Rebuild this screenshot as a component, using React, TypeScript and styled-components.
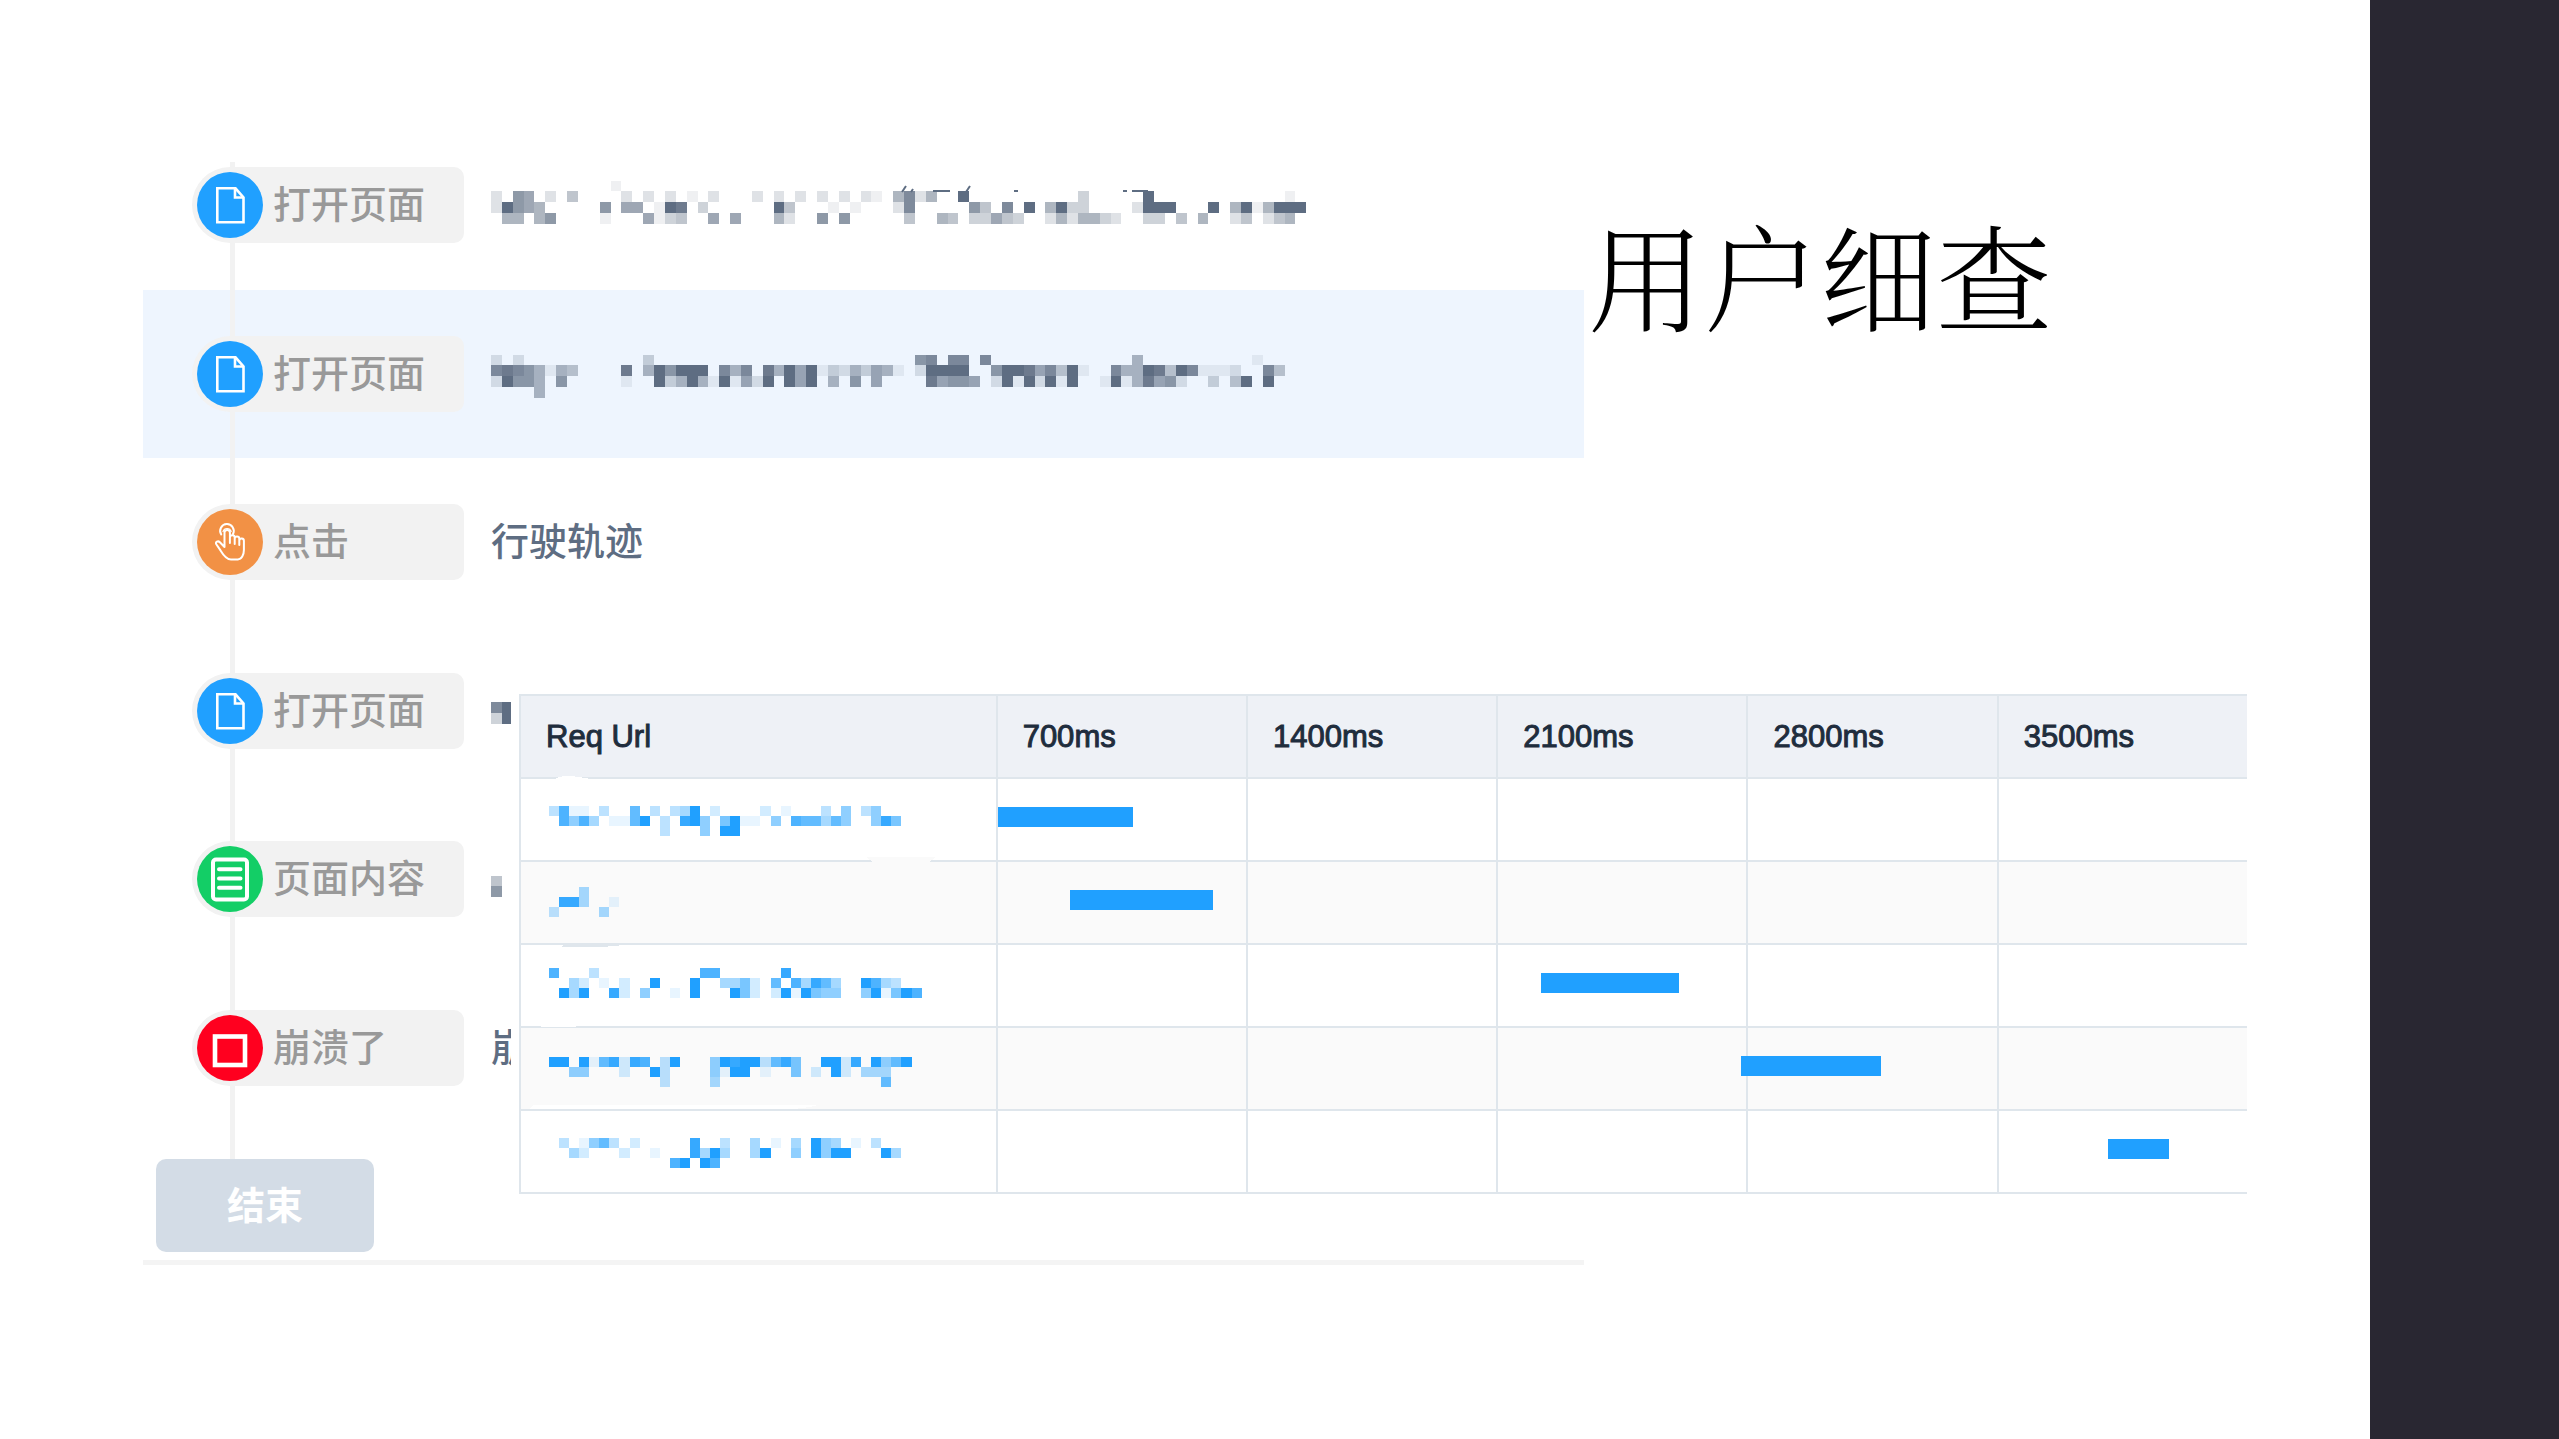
import React from "react";
import styled, { createGlobalStyle } from "styled-components";

const GlobalStyle = createGlobalStyle`
  *, *::before, *::after { box-sizing: border-box; }
  body { margin: 0; background: #fff; }
`;

const sans = `"Liberation Sans", "Noto Sans CJK SC", sans-serif`;
const slate = "#5e6d82";
const blue = "#20a0ff";
const line = "#dfe6ec";

const Page = styled.div`
  display: flex;
  min-height: 100vh;
  font-family: ${sans};
  background: #fff;
`;

const Slide = styled.main`
  flex: 1;
  min-width: 0;
  display: grid;
  grid-template-columns: 368px minmax(0, 1073fr) minmax(0, 663fr);
  grid-template-rows: 573px auto 1fr;
  padding: 121px 123px 0 143px;
`;

const SideBand = styled.aside`
  flex: 0 0 189px;
  background: #292732;
`;

const Title = styled.h1`
  grid-area: 1 / 3 / 2 / 4;
  margin: 0;
  padding: 94px 0 0 4px;
  font-family: "Noto Serif CJK SC", "Songti SC", SimSun, "Noto Sans CJK SC", serif;
  font-size: 116px;
  line-height: 116px;
  font-weight: 300;
  color: #000;
  white-space: nowrap;
`;

const Timeline = styled.section`
  grid-area: 1 / 1 / 4 / 3;
  align-self: start;
  padding-bottom: 8px;
  border-bottom: 5px solid #f4f4f4;
`;

const Steps = styled.ol`
  position: relative;
  display: grid;
  grid-auto-rows: 1fr;
  height: 1011px;
  margin: 0 0 27px;
  padding: 0;
  list-style: none;

  &::before {
    content: "";
    position: absolute;
    left: 87px;
    top: 41px;
    bottom: -27px;
    width: 5px;
    background: #f2f2f2;
  }
`;

const Step = styled.li<{ $active?: boolean }>`
  display: flex;
  align-items: center;
  gap: 27px;
  padding-left: 49px;
  background: ${(p) => (p.$active ? "#eef5fe" : "transparent")};
`;

const Tag = styled.div`
  position: relative;
  display: flex;
  align-items: center;
  gap: 10px;
  width: 272px;
  height: 76px;
  padding-left: 5px;
  border-radius: 38px 10px 10px 38px;
  background: #f2f2f2;
  color: #999;
  font-size: 38px;
  line-height: 38px;
  font-weight: 500;
`;

const Disc = styled.span<{ $color: string }>`
  display: block;
  width: 66px;
  height: 66px;
  border-radius: 50%;
  background: ${(p) => p.$color};
`;

const Glyph = styled.svg`
  display: block;
  width: 66px;
  height: 66px;
  fill: none;
  stroke: #fff;
`;

const Detail = styled.span`
  color: ${slate};
  font-size: 38px;
  line-height: 38px;
  font-weight: 500;
  white-space: nowrap;
`;

const EndButton = styled.button`
  display: block;
  width: 218px;
  height: 93px;
  margin: 0 0 0 13px;
  padding: 0;
  border: 0;
  border-radius: 10px;
  background: #d3dce6;
  color: #fff;
  font-family: inherit;
  font-size: 38px;
  line-height: 38px;
  font-weight: 700;
`;

const Panel = styled.section`
  grid-area: 2 / 2 / 3 / 4;
  position: relative;
  padding-left: 8px;
  background: #fff;
`;

const Table = styled.table`
  width: 100%;
  table-layout: fixed;
  border-collapse: separate;
  border-spacing: 0;
  border-top: 2px solid ${line};
  border-left: 2px solid ${line};
`;

const UrlCol = styled.col`
  width: 27.5%;
`;

const TimeCol = styled.col`
  width: 14.5%;
`;

const HeadCell = styled.th`
  height: 83px;
  padding: 0 0 0 25px;
  border-bottom: 2px solid ${line};
  background: #eef1f6;
  color: #1f2d3d;
  font-size: 31px;
  line-height: 36px;
  font-weight: 400;
  -webkit-text-stroke: 1px #1f2d3d;
  text-align: left;

  & + & { border-left: 2px solid ${line}; }
`;

const Row = styled.tr<{ $striped: boolean }>`
  background: ${(p) => (p.$striped ? "#fafafa" : "#fff")};
`;

const Cell = styled.td`
  position: relative;
  height: 83px;
  padding: 0 0 0 25px;
  border-bottom: 2px solid ${line};

  & + & { border-left: 2px solid ${line}; }
`;

const Bar = styled.span`
  position: absolute;
  z-index: 1;
  top: 28px;
  height: 20px;
  background: ${blue};
`;

const MosaicSvg = styled.svg`
  display: block;
  overflow: visible;
  shape-rendering: crispEdges;
`;

/* Each mosaic line is a list of "column:run" groups; every character of a run
   is one tile, its strength from 1 (faint) to A (solid). */
type MosaicData = { dx?: number; dy: number; lines: string[] };

function Mosaic({
  data, pitch, color, width, height, children,
}: {
  data: MosaicData; pitch: number; color: string; width: number; height: number; children?: React.ReactNode;
}) {
  const tiles: React.ReactNode[] = [];
  data.lines.forEach((text, row) => {
    text.split(" ").filter(Boolean).forEach((group) => {
      const [start, run] = group.split(":");
      run.split("").forEach((ch, i) => {
        const col = Number(start) + i;
        const x = Math.round((data.dx ?? 0) + col * pitch);
        const y = Math.round(data.dy + row * pitch);
        tiles.push(
          <rect
            key={`${row}-${col}`}
            x={x}
            y={y}
            width={Math.round((data.dx ?? 0) + (col + 1) * pitch) - x}
            height={Math.round(data.dy + (row + 1) * pitch) - y}
            fill={color}
            opacity={parseInt(ch, 16) / 10}
          />
        );
      });
    });
  });
  return (
    <MosaicSvg width={width} height={height} viewBox={`0 0 ${width} ${height}`} aria-hidden="true">
      {tiles}
      {children}
    </MosaicSvg>
  );
}

const PageIcon = () => (
  <Glyph viewBox="0 0 66 66" strokeWidth="2.6">
    <path d="M20.3 16.3H38.5L46.5 25.5V50.2H20.3Z" />
    <path d="M38 16.5V25.5H46.5" />
  </Glyph>
);

const TapIcon = () => (
  <Glyph viewBox="0 0 66 66" strokeWidth="2" strokeLinecap="round" strokeLinejoin="round">
    <path d="M27.5 38V23.6a2.7 2.7 0 0 1 5.4 0V34M32.9 28.6a2.4 2.4 0 0 1 4.8 0V35M37.7 29.8a2.3 2.3 0 0 1 4.6 0V36M42.3 31.6a2.3 2.3 0 0 1 4.6 .4V41c0 5-2.4 9.4-6 9.4H34c-3.5 0-7.5-4-10.5-9l-4.2-6.2c-1.2-2.2 1.6-3.8 3.6-2L27.5 38" />
    <path d="M24.2 25.5a6.8 6.8 0 1 1 11.8-.5" />
    <path d="M26 22.5a4.3 4.3 0 0 1 8.2 0" strokeWidth="1.2" />
  </Glyph>
);

const ContentIcon = () => (
  <Glyph viewBox="0 0 66 66" strokeWidth="4" strokeLinecap="round">
    <rect x="16" y="13.5" width="34" height="40" rx="3" />
    <path d="M22 23.3H43.5M22 32.5H43.5M22 41.7H43.5" />
  </Glyph>
);

const CrashIcon = () => (
  <Glyph viewBox="0 0 66 66" strokeWidth="4.6">
    <rect x="18" y="21.5" width="30" height="28.5" />
  </Glyph>
);

const visits: MosaicData[] = [
  {
    dy: 8.5,
    lines: [
      "11:1",
      "0:2 2:76 5:2 7:4 12:2 14:2 16:2 18:1 20:2 24:2 26:2 28:2 30:2 32:2 34:21 37:5825 43:A 54:3 60:A 73:1",
      "0:2A765 10:7 12:66 15:1A9 19:3 26:A4 31:1 33:1 37:28 44:74 47:8 49:A 51:5A33 59:2AAA 66:A 68:5A15AAA",
      "1:55 4:57 10:1 14:6134 20:6 22:6 26:52 30:7 32:7 38:4 41:54 44:33643 51:2525532 60:33 63:4 65:5 68:24 71:245",
    ],
  },
  {
    dy: 13.5,
    lines: [
      "0:2 2:2 14:3 39:78 42:88 45:8 59:5 70:1",
      "0:898751 6:54 12:9 14:5A7AAA 21:858 25:95A6A1 31:3253651 39:2AAAA 46:7AA9684A1 57:855A94A81112 71:84",
      "0:2A775 6:7 12:1 15:A35A51A162A 27:A6A 31:5 33:7 35:6 40:96776 46:2A1A2A1A 56:1A159672 66:3 68:4A 71:A",
      "4:5",
    ],
  },
  { dy: 24, lines: ["0:8A", "0:3A"] },
  { dy: 29.5, lines: ["0:4", "0:7"] },
];

const VisitMosaic = ({ index, width = 820, children }: { index: number; width?: number; children?: React.ReactNode }) => (
  <Mosaic data={visits[index]} pitch={10.87} color={slate} width={width} height={66}>{children}</Mosaic>
);

const steps = [
  {
    label: "打开页面", color: blue, icon: <PageIcon />,
    detail: (
      <VisitMosaic index={0}>
        <path
          d="M411 20l4-6M420 20l2-3M442 19h17M475 20l4-6M523 19h4M632 19h4M641 19h16"
          stroke={slate}
          strokeWidth="2"
          shapeRendering="auto"
        />
      </VisitMosaic>
    ),
  },
  { label: "打开页面", color: blue, icon: <PageIcon />, active: true, detail: <VisitMosaic index={1} /> },
  { label: "点击", color: "#f29145", icon: <TapIcon />, detail: <Detail>行驶轨迹</Detail> },
  { label: "打开页面", color: blue, icon: <PageIcon />, detail: <VisitMosaic index={2} width={22} /> },
  { label: "页面内容", color: "#13ce66", icon: <ContentIcon />, detail: <VisitMosaic index={3} width={22} /> },
  { label: "崩溃了", color: "#ff001f", icon: <CrashIcon />, detail: <Detail>崩</Detail> },
];

const ticks = [700, 1400, 2100, 2800, 3500];
const stepMs = 700;

const requests: { start: number; duration: number; url: MosaicData; smudge?: React.ReactNode }[] = [
  {
    start: 0, duration: 382,
    url: {
      dy: 11,
      lines: [
        "0:3811 5:3 8:7 10:3 12:34A 16:2 21:2 23:1 27:3 29:5 31:35",
        "1:8584 6:117A 11:3 13:9A5 17:6A11 22:5 24:877475 32:596",
        "11:3 15:5 17:AA",
      ],
    },
    smudge: <path d="M9-16Q12-19 24-19Q36-18 44-16Z" fill="#fff" />,
  },
  {
    start: 204, duration: 403,
    url: { dy: 9, lines: ["3:4", "1:994 6:1", "0:3 5:4"] },
    smudge: <path d="M320-21H390L382-15H328Z" fill="#fafafa" />,
  },
  {
    start: 1521, duration: 388,
    url: {
      dy: 7,
      lines: [
        "0:8 4:3 15:88 23:9",
        "2:42 5:1 7:2 10:A 14:A 17:4462 22:7 24:84974 31:A843",
        "1:A4A 6:92 9:5 12:1 14:A 18:A62 22:2A1A655 31:5A16A8",
      ],
    },
    smudge: <path d="M18-16H78Q60-14 50-14H15Z" fill={line} />,
  },
  {
    start: 2084, duration: 396,
    url: {
      dy: 13,
      lines: [
        "0:AA 3:A179298 11:3A 16:5A9AA3796 27:AA29 32:A57A",
        "2:55 7:2 10:A3 16:51AA 21:1 24:6 26:2 28:A2 31:444",
        "11:3 16:4 33:7",
      ],
    },
    smudge: <path d="M-4-19H30V-17H-6Z" fill="#fff" />,
  },
  {
    start: 3109, duration: 172,
    url: {
      dy: 11,
      lines: [
        "1:3 3:1573 8:2 14:9 17:3 20:4 22:1 24:4 26:A54 30:1 32:3",
        "2:42 7:2 10:1 14:94A4 20:4A 24:5 26:A5AA 33:A4",
        "12:8A 15:A8",
      ],
    },
    smudge: <path d="M-13-22H272Q262-19 246-18H-16Z" fill="#fff" />,
  },
];

export default function App() {
  return (
    <Page>
      <GlobalStyle />
      <Slide>
        <Title>用户细查</Title>
        <Timeline>
          <Steps>
            {steps.map((s, i) => (
              <Step key={i} $active={s.active}>
                <Tag>
                  <Disc $color={s.color}>{s.icon}</Disc>
                  {s.label}
                </Tag>
                {s.detail}
              </Step>
            ))}
          </Steps>
          <EndButton type="button">结束</EndButton>
        </Timeline>
        <Panel>
          <Table>
            <colgroup>
              <UrlCol />
              {ticks.slice(1).map((t) => <TimeCol key={t} />)}
              <col />
            </colgroup>
            <thead>
              <tr>
                <HeadCell scope="col">Req Url</HeadCell>
                {ticks.map((t) => <HeadCell key={t} scope="col">{t}ms</HeadCell>)}
              </tr>
            </thead>
            <tbody>
              {requests.map((r, i) => (
                <Row key={i} $striped={i % 2 === 1}>
                  <Cell>
                    <Mosaic data={{ ...r.url, dx: 3 }} pitch={10.07} color={blue} width={420} height={50}>
                      {r.smudge}
                    </Mosaic>
                  </Cell>
                  {ticks.map((t, c) => (
                    <Cell key={t}>
                      {Math.floor(r.start / stepMs) === c && (
                        <Bar
                          style={{
                            left: `${((r.start % stepMs) / stepMs) * 100}%`,
                            width: `${(r.duration / stepMs) * 100}%`,
                          }}
                        />
                      )}
                    </Cell>
                  ))}
                </Row>
              ))}
            </tbody>
          </Table>
        </Panel>
      </Slide>
      <SideBand />
    </Page>
  );
}
